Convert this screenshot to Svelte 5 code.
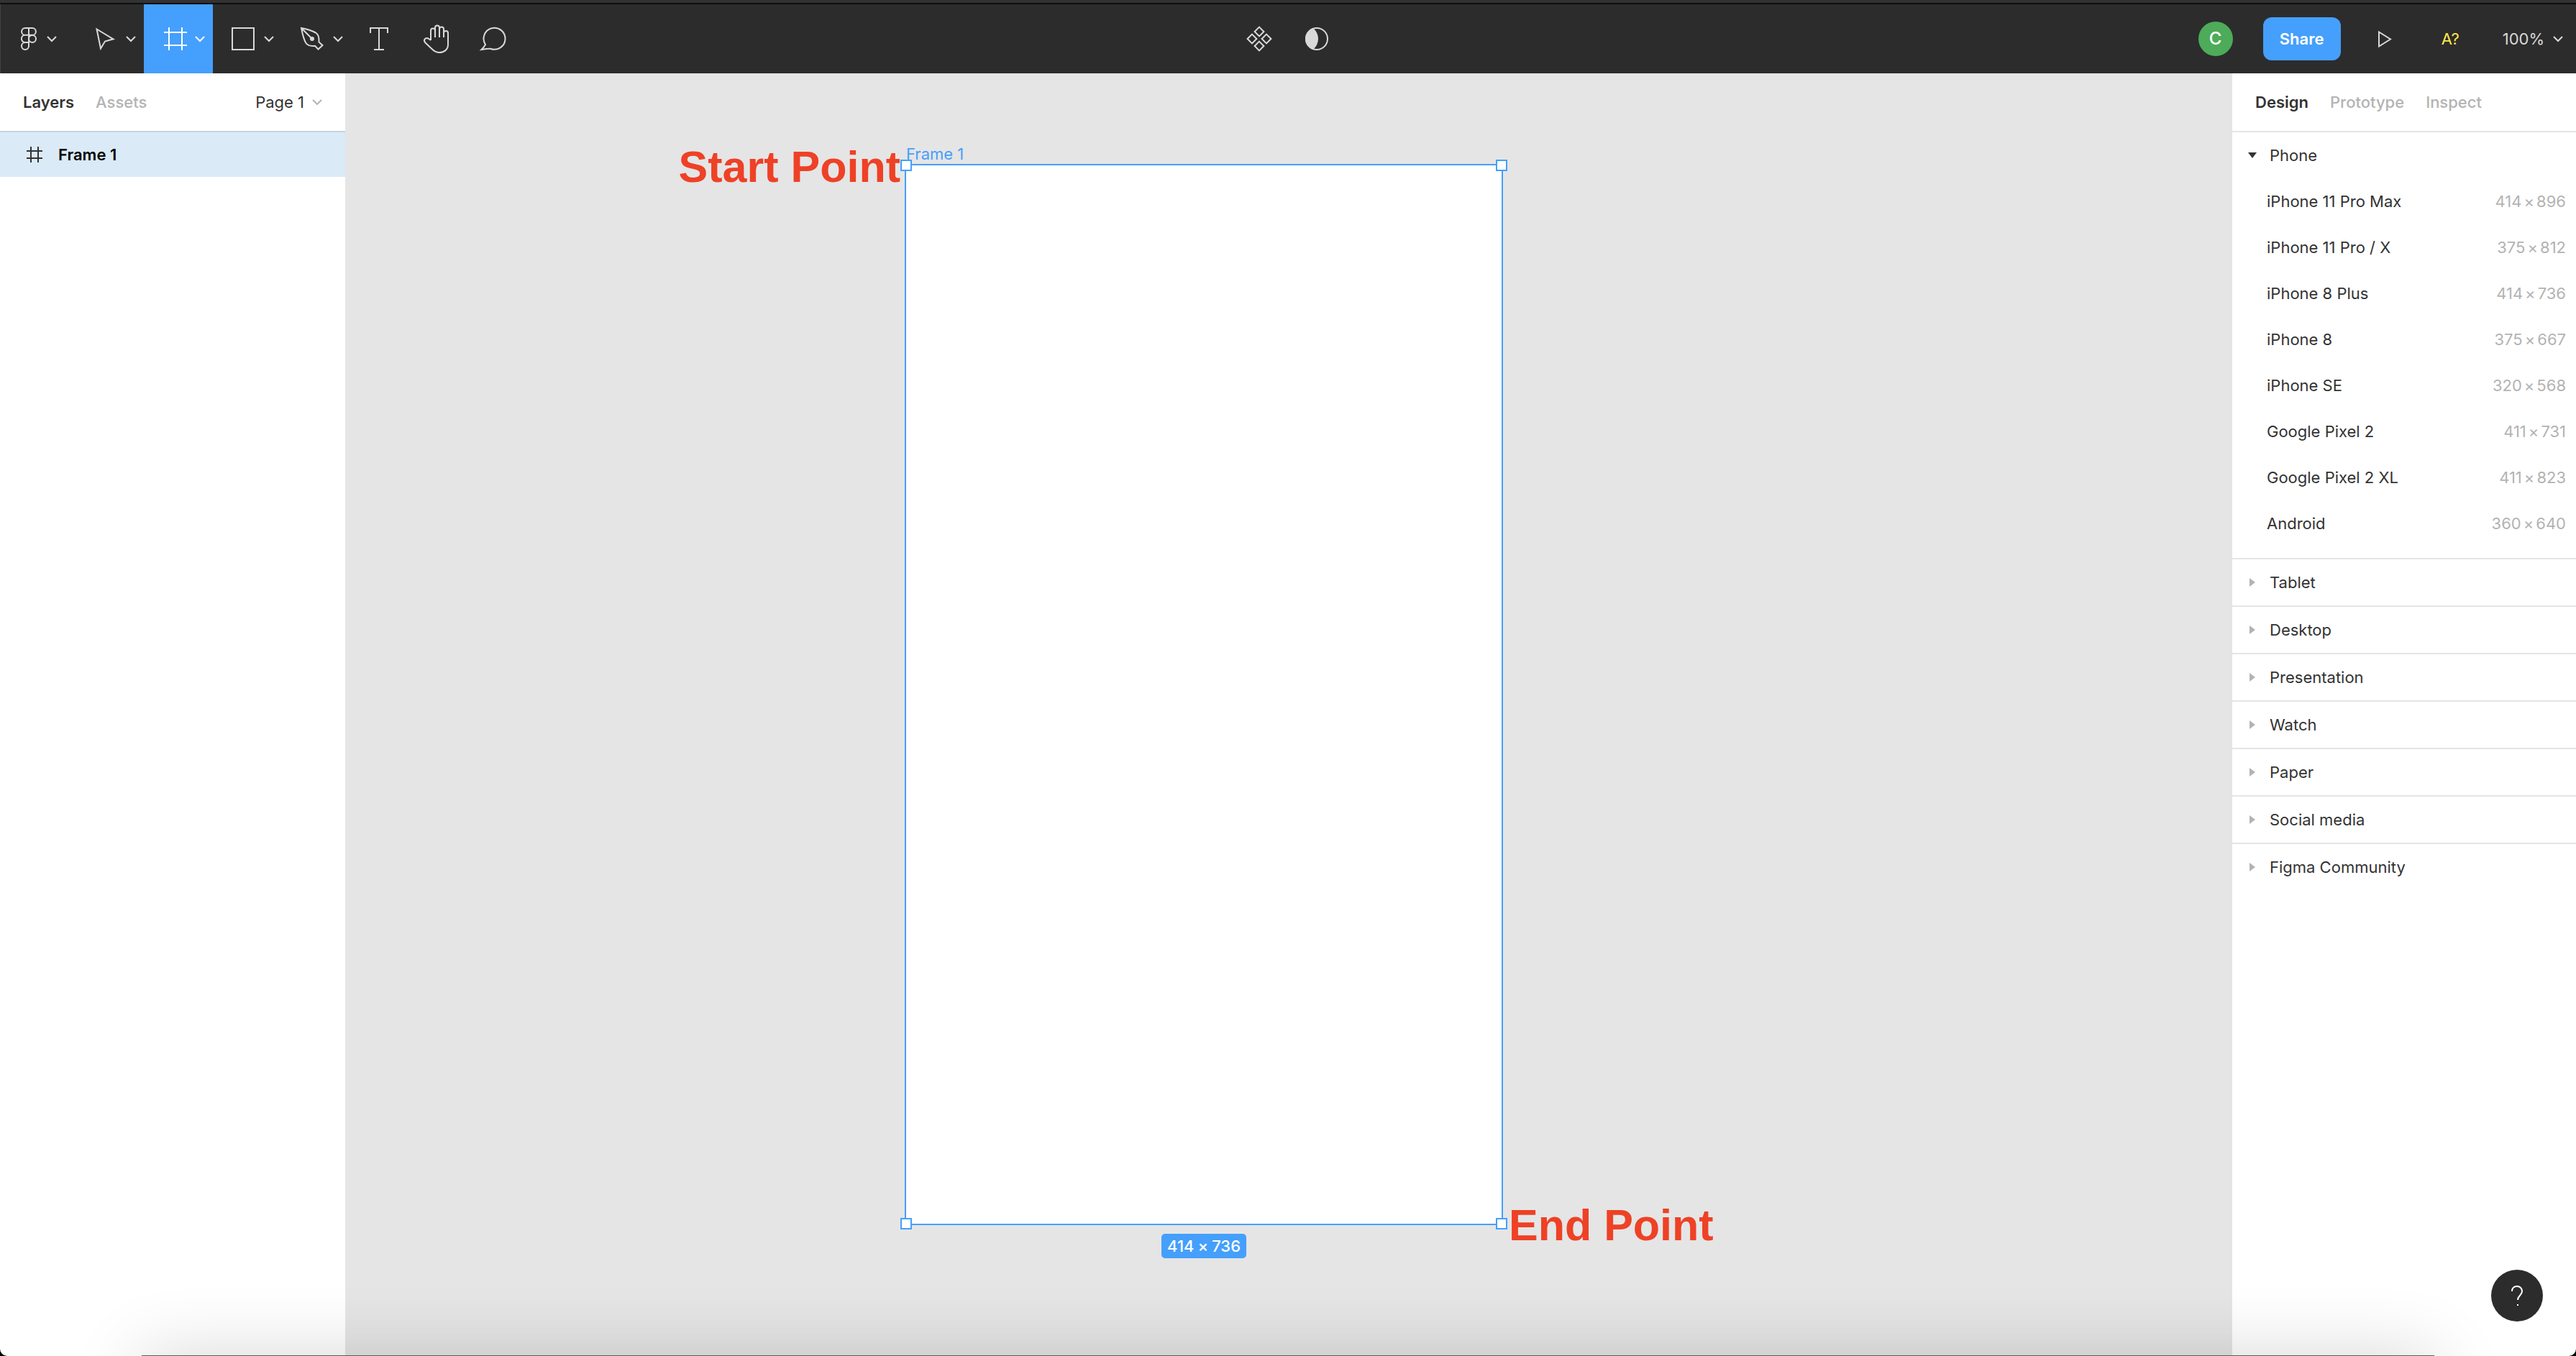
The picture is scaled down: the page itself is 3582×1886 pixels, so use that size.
<script>
  const devices = [
    ['iPhone 11 Pro Max', 414, 896],
    ['iPhone 11 Pro / X', 375, 812],
    ['iPhone 8 Plus', 414, 736],
    ['iPhone 8', 375, 667],
    ['iPhone SE', 320, 568],
    ['Google Pixel 2', 411, 731],
    ['Google Pixel 2 XL', 411, 823],
    ['Android', 360, 640],
  ];
  const groups = ['Tablet', 'Desktop', 'Presentation', 'Watch', 'Paper', 'Social media', 'Figma Community'];
  const handles = ['nw', 'ne', 'sw', 'se'];
</script>

<div class="window">
  <header class="toolbar">
    <nav class="tools" aria-label="Tools">
      <button class="tool menu" aria-label="Main menu">
        <svg width="104" height="96" viewBox="0 0 104 96">
          <path d="M40 33h-5a4.9 4.9 0 0 0 0 9.800h5zM40 33h5a4.900 4.900 0 0 1 0 9.800h-5zM40 42.800h-5a5.100 5.100 0 0 0 0 10.200h5zM40 53h-5a5 5 0 1 0 5 5z" />
          <circle cx="45" cy="48" r="5" />
          <path d="M66 45l6 6 6-6" />
        </svg>
      </button>
      <button class="tool" aria-label="Move">
        <svg width="96" height="96" viewBox="0 0 96 96">
          <path d="M30.500 34.500L53.500 48.300L42 51.500L36 61.500z" />
          <path d="M72 45l6 6 6-6" />
        </svg>
      </button>
      <button class="tool active" aria-label="Frame">
        <svg width="96" height="96" viewBox="0 0 96 96">
          <path d="M35 32v32M53 32v32M28 39h32M28 57h32" />
          <path d="M72 45l6 6 6-6" />
        </svg>
      </button>
      <button class="tool" aria-label="Rectangle">
        <svg width="96" height="96" viewBox="0 0 96 96">
          <path d="M27 33h30v30H27z" />
          <path d="M72 45l6 6 6-6" />
        </svg>
      </button>
      <button class="tool" aria-label="Pen">
        <svg width="96" height="96" viewBox="0 0 96 96">
          <path d="M27 33C35 34.500 41.500 36.500 47 39.500C51 41.800 51.800 47 51.500 52.500L56.500 57L50.500 62.500L46 57.800C40 58.500 36.500 58 33.500 54C30 48.500 28.500 41 27 33zM27 33l15 15" />
          <circle class="solid" cx="42" cy="48" r="2" />
          <path d="M72 45l6 6 6-6" />
        </svg>
      </button>
      <button class="tool" aria-label="Text">
        <svg width="80" height="96" viewBox="0 0 80 96">
          <path d="M27 40v-7h24v7M39 33v30M32 63h14" />
        </svg>
      </button>
      <button class="tool" aria-label="Hand">
        <svg width="80" height="96" viewBox="0 0 80 96">
          <path d="M31 50V36.500a3 3 0 0 1 6 0V46M37 36V32.500a3 3 0 0 1 6 0V46M43 34.500a3 3 0 0 1 6 0V46M49 40a3 3 0 0 1 6 0V56C55 63 49.500 67 43 67C38 67 36 65.500 33 62.500L23.500 53.500C20 50 23.500 45.500 27.500 47.500L31 50" />
        </svg>
      </button>
      <button class="tool" aria-label="Comment">
        <svg width="80" height="96" viewBox="0 0 80 96">
          <path d="M27 56A15 15 0 1 1 34 61.700Q30 61.500 21.500 63Q25.500 59 27 56z" />
        </svg>
      </button>
    </nav>
    <div class="tools">
      <button class="tool" aria-label="Create component">
        <svg width="80" height="96" viewBox="0 0 80 96">
          <path d="M40 31.600l6.400 6.400-6.400 6.400-6.400-6.400zM40 51.600l6.400 6.400-6.400 6.400-6.400-6.400zM30 41.600l6.400 6.400-6.400 6.400-6.400-6.400zM50 41.600l6.400 6.400-6.400 6.400-6.400-6.400z" />
        </svg>
      </button>
      <button class="tool" aria-label="Use as mask">
        <svg width="80" height="96" viewBox="0 0 80 96">
          <circle cx="40" cy="48" r="15" />
          <path class="solid" d="M34.500 34A15 15 0 0 0 34.500 62Q41 56 41 48T34.500 34z" />
        </svg>
      </button>
    </div>
    <div class="account">
      <span class="avatar">C</span>
      <button class="share">Share</button>
      <button class="tool" aria-label="Present">
        <svg width="56" height="96" viewBox="0 0 56 96">
          <path d="M21 38.500v20L37 48.500z" />
        </svg>
      </button>
      <button class="fonts">A?</button>
      <button class="zoom">100%
        <svg width="14" height="10" viewBox="0 0 14 10"><path d="M1 2l6 6 6-6" /></svg>
      </button>
    </div>
  </header>

  <div class="body">
    <aside class="left">
      <div class="tabs">
        <button class="tab on">Layers</button>
        <button class="tab">Assets</button>
        <button class="page">Page 1
          <svg width="14" height="8" viewBox="0 0 14 8"><path d="M1 1l6 6 6-6" /></svg>
        </button>
      </div>
      <button class="layer">
        <svg width="22" height="22" viewBox="0 0 22 22"><path d="M6 0v22M16 0v22M0 6h22M0 16h22" /></svg>
        Frame 1
      </button>
    </aside>

    <main class="canvas">
      <div class="frame">
        <span class="note start">Start Point</span>
        <span class="name">Frame 1</span>
        {#each handles as h}<i class="handle {h}"></i>{/each}
        <span class="size"><span>414</span><span>×</span><span>736</span></span>
        <span class="note end">End Point</span>
      </div>
    </main>

    <aside class="right">
      <div class="tabs">
        <button class="tab on">Design</button>
        <button class="tab">Prototype</button>
        <button class="tab">Inspect</button>
      </div>
      <section class="phones">
        <button class="group">
          <svg class="open" width="12" height="12" viewBox="0 0 12 12"><path d="M0 2h12L6 10z" /></svg>
          Phone
        </button>
        {#each devices as [name, w, h]}
          <button class="device">
            <span>{name}</span>
            <span class="dims"><span>{w}</span><span>×</span><span>{h}</span></span>
          </button>
        {/each}
      </section>
      {#each groups as g}
        <button class="group closed">
          <svg width="12" height="12" viewBox="0 0 12 12"><path d="M2 0v12l8-6z" /></svg>
          {g}
        </button>
      {/each}
    </aside>
  </div>

  <div class="dock"></div>
  <button class="help" aria-label="Help">
    <svg width="72" height="72" viewBox="0 0 72 72">
      <path d="M29 30C29 25.500 32 23 36 23S43 26 43 30C43 35.500 37 36 37 42M37 48v2" />
    </svg>
  </button>
</div>

<style>
  :global(body) {
    background: #000;
  }
  .window {
    position: relative;
    box-sizing: border-box;
    display: flex;
    flex-direction: column;
    height: 100vh;
    overflow: hidden;
    border-top: 4px solid #323234;
    border-radius: 0 0 10px 10px;
    background: #fff;
    color: #333;
    font: 400 22px/32px Inter, sans-serif;
  }
  button {
    margin: 0;
    padding: 0;
    border: 0;
    background: none;
    color: inherit;
    font: inherit;
    text-align: left;
  }
  svg {
    display: block;
    flex: none;
    fill: none;
    stroke: currentColor;
    stroke-width: 2;
  }
  .solid {
    fill: currentColor;
  }
  .toolbar {
    display: grid;
    grid-template-columns: 1fr auto 1fr;
    height: 96px;
    flex: none;
    border-top: 2px solid #0e0e10;
    background: #2c2c2c;
    box-shadow: inset 1px 0 #444;
    color: #d9d9d9;
  }
  .tools {
    display: flex;
  }
  .active {
    background: #459ffc;
    color: #fff;
  }
  .account {
    display: flex;
    align-items: center;
    justify-content: flex-end;
    padding-right: 18px;
  }
  .avatar {
    width: 48px;
    border-radius: 50%;
    background: #4dab59;
    color: #fff;
    font-size: 24px;
    font-weight: 500;
    line-height: 48px;
    text-align: center;
  }
  .share {
    width: 108px;
    height: 60px;
    margin: 0 32px 0 42px;
    border-radius: 12px;
    background: #459ffc;
    color: #fff;
    font-weight: 600;
    text-align: center;
  }
  .fonts {
    margin: 0 60px 0 52px;
    color: #ffe74b;
  }
  .zoom {
    display: flex;
    align-items: center;
    gap: 12px;
  }
  .body {
    display: flex;
    flex: 1;
    min-height: 0;
  }
  .left {
    width: 480px;
    flex: none;
  }
  .right {
    width: 478px;
    flex: none;
  }
  .tabs {
    display: flex;
    align-items: center;
    gap: 30px;
    height: 80px;
    padding: 0 32px;
    border-bottom: 2px solid #e5e5e5;
  }
  .left .tabs {
    border-color: #c5d3de;
  }
  .tab {
    color: #b3b3b3;
    font-weight: 500;
  }
  .tab.on {
    color: #333;
    font-weight: 600;
  }
  .page {
    display: flex;
    align-items: center;
    gap: 11px;
    margin-left: auto;
  }
  .page svg {
    color: #b3b3b3;
  }
  .layer {
    display: flex;
    align-items: center;
    gap: 22px;
    width: 100%;
    height: 62px;
    padding-left: 37px;
    background: #daeaf7;
    color: #000;
    font-weight: 600;
  }
  .layer svg {
    color: #333;
  }
  .canvas {
    flex: 1;
    background: #e5e5e5;
  }
  .frame {
    position: relative;
    width: 828px;
    height: 1472px;
    margin: 126px 0 0 778px;
    border: 2px solid #459ffc;
    background: #fff;
  }
  .frame > * {
    position: absolute;
    white-space: nowrap;
  }
  .note {
    color: #ee4126;
    font: 700 61px/72px "Liberation Sans", Arial, sans-serif;
  }
  .start {
    right: calc(100% + 8px);
    top: -34px;
  }
  .end {
    left: calc(100% + 10px);
    bottom: -38px;
  }
  .name {
    left: 0;
    bottom: 100%;
    color: #459ffc;
  }
  .handle {
    width: 12px;
    height: 12px;
    border: 2px solid #459ffc;
    background: #fff;
  }
  .nw,
  .ne {
    top: -8px;
  }
  .sw,
  .se {
    bottom: -8px;
  }
  .nw,
  .sw {
    left: -8px;
  }
  .ne,
  .se {
    right: -8px;
  }
  .size {
    display: flex;
    gap: 5px;
    top: calc(100% + 14px);
    left: 50%;
    padding: 0 8px;
    border-radius: 5px;
    background: #459ffc;
    color: #fff;
    font-weight: 500;
    line-height: 34px;
    transform: translateX(-50%);
  }
  .phones {
    padding-bottom: 16px;
  }
  .group {
    display: flex;
    align-items: center;
    gap: 18px;
    width: 100%;
    height: 64px;
    padding-left: 22px;
  }
  .group svg {
    fill: #b3b3b3;
    stroke: none;
  }
  .group .open {
    fill: #333;
  }
  .closed {
    height: 66px;
    border-top: 2px solid #e5e5e5;
  }
  .device {
    display: flex;
    align-items: center;
    justify-content: space-between;
    width: 100%;
    height: 64px;
    padding: 0 14px 0 48px;
  }
  .dims {
    display: flex;
    gap: 3px;
    color: #b3b3b3;
  }
  .dock {
    position: absolute;
    top: calc(100% - 1px);
    left: 197px;
    right: 197px;
    height: 200px;
    background: #5a5a5a;
    box-shadow: 0 0 100px rgba(0, 0, 0, 0.16);
  }
  .help {
    position: absolute;
    right: 46px;
    bottom: 48px;
    border-radius: 50%;
    background: #2c2c2c;
    color: #fff;
  }
</style>
